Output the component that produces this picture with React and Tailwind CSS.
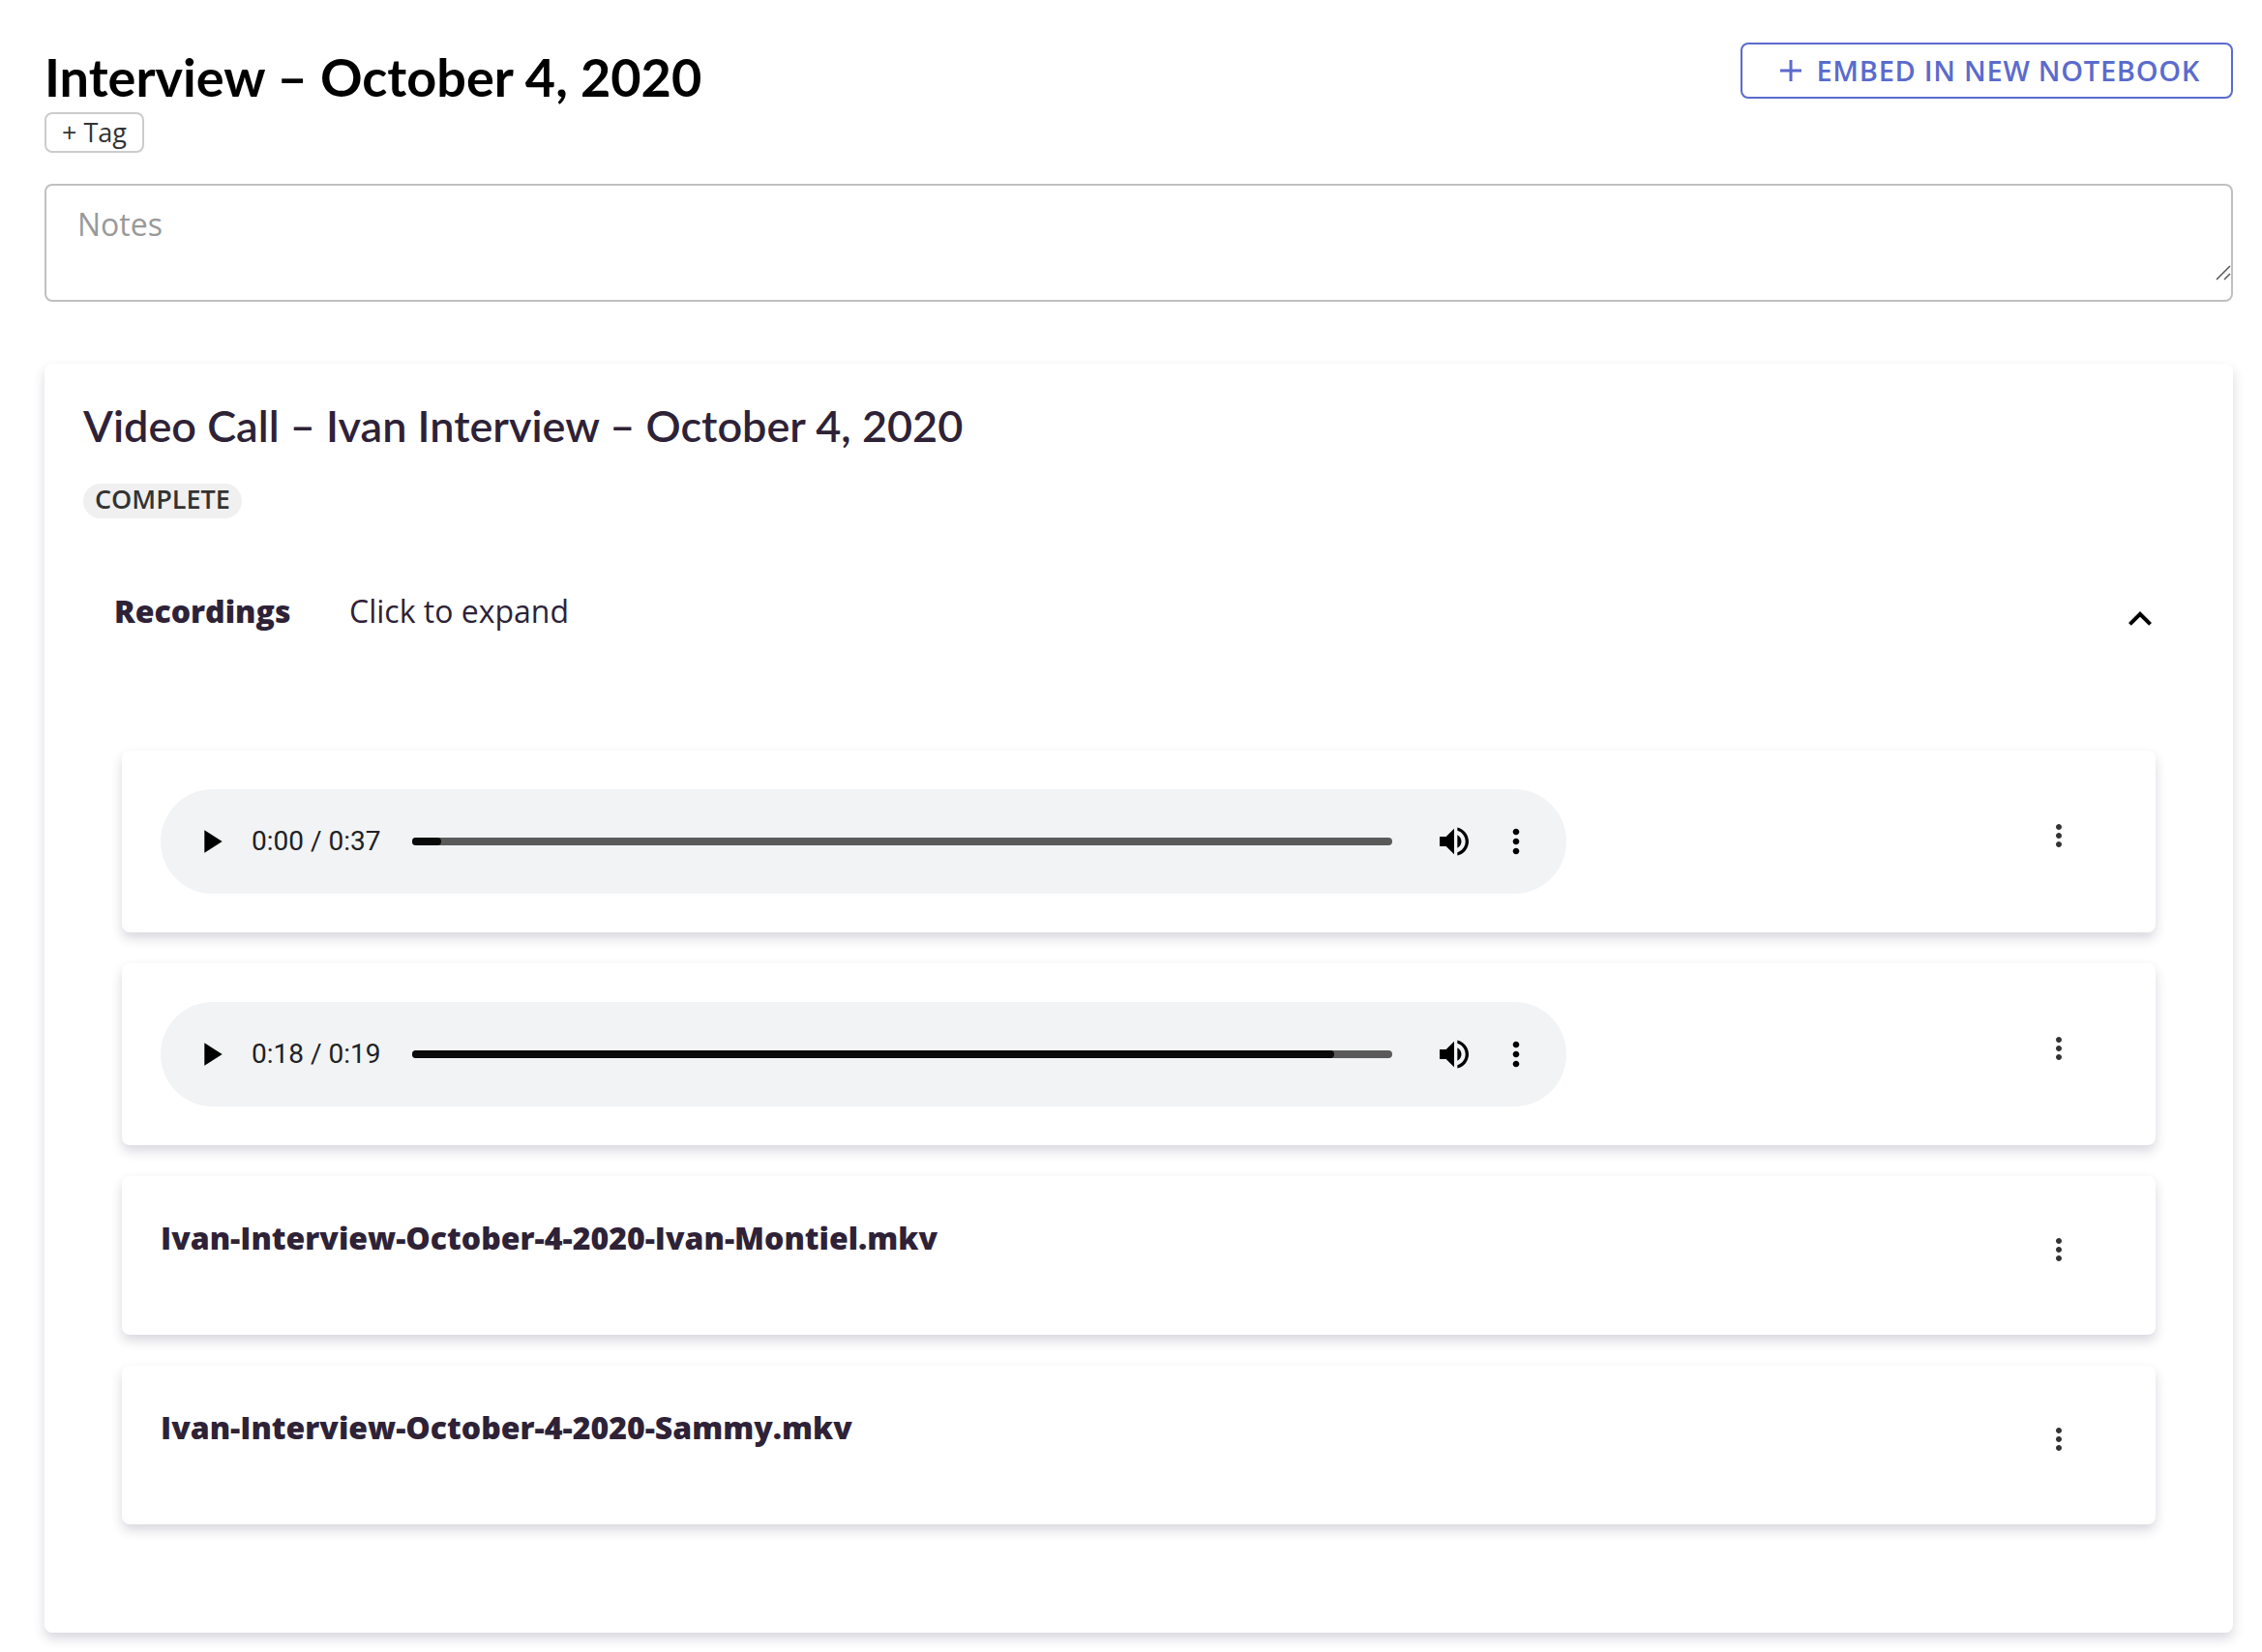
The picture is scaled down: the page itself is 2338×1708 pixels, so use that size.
import React from "react";

const recordings = [
  { id: "a", kind: "audio", time: "0:00 / 0:37", played: 3 },
  { id: "b", kind: "audio", time: "0:18 / 0:19", played: 94 },
  { id: "c", kind: "file", name: "Ivan-Interview-October-4-2020-Ivan-Montiel.mkv" },
  { id: "d", kind: "file", name: "Ivan-Interview-October-4-2020-Sammy.mkv" },
];

function Icon({ d, className }) {
  return (
    <svg viewBox="0 0 24 24" fill="currentColor" aria-hidden="true" className={className}>
      <path d={d} />
    </svg>
  );
}

const PLAY = "M8 5v14l11-7z";
const MORE =
  "M12 8c1.1 0 2-.9 2-2s-.9-2-2-2-2 .9-2 2 .9 2 2 2zm0 2c-1.1 0-2 .9-2 2s.9 2 2 2 2-.9 2-2-.9-2-2-2zm0 6c-1.1 0-2 .9-2 2s.9 2 2 2 2-.9 2-2-.9-2-2-2z";
const VOLUME =
  "M3 9v6h4l5 5V4L7 9H3zm13.5 3c0-1.77-1.02-3.29-2.5-4.03v8.05c1.48-.73 2.5-2.25 2.5-4.02zM14 3.23v2.06c2.89.86 5 3.54 5 6.71s-2.11 5.85-5 6.71v2.06c4.01-.91 7-4.49 7-8.77s-2.99-7.86-7-8.77z";
const UP = "M12 8l-6 6 1.41 1.41L12 10.83l4.59 4.58L18 14z";

function Player({ time, played }) {
  return (
    <div className="flex h-[108px] w-[73.4%] items-center rounded-full bg-[#f1f3f4] px-8 font-[Roboto,sans-serif]">
      <button type="button" aria-label="Play" className="shrink-0">
        <Icon d={PLAY} className="size-10 text-black" />
      </button>
      <span className="ml-[22px] w-[166px] shrink-0 text-[28px] leading-8 whitespace-nowrap text-[#202124]">{time}</span>
      <div className="relative h-2 grow rounded-full bg-[#5a5a5a]">
        <div className="h-2 rounded-full bg-[#0a0a0a]" style={{ width: `${played}%` }} />
        <input
          type="range"
          aria-label="Position"
          min="0"
          max="100"
          defaultValue={played}
          className="absolute inset-0 h-2 w-full cursor-pointer opacity-0"
        />
      </div>
      <button type="button" aria-label="Mute" className="ml-11 shrink-0">
        <Icon d={VOLUME} className="size-10 text-black" />
      </button>
      <button type="button" aria-label="Player options" className="ml-6 shrink-0">
        <Icon d={MORE} className="size-10 text-black" />
      </button>
    </div>
  );
}

function Recording({ item }) {
  const audio = item.kind === "audio";
  return (
    <li
      className={
        "flex justify-between rounded-lg bg-white pt-10 pr-[82px] pl-10 shadow-[0_6px_12px_rgba(46,42,80,0.19)] " +
        (audio ? "h-[188px]" : "h-[164px]")
      }
    >
      {audio ? (
        <Player time={item.time} played={item.played} />
      ) : (
        <h3 className="text-[32px] leading-[48px] font-extrabold">{item.name}</h3>
      )}
      <button
        type="button"
        aria-label="Recording options"
        className={"flex h-9 shrink-0 text-[#333] " + (audio ? "mt-[30px]" : "mt-[18px]")}
      >
        <Icon d={MORE} className="size-9" />
      </button>
    </li>
  );
}

export default function App() {
  return (
    <main className="min-h-screen bg-white pt-11 pr-[30px] pb-5 pl-[46px] font-['Open_Sans',sans-serif] text-[#2e2237]">
      <header className="flex items-start justify-between">
        <div>
          <h1 className="font-[Lato,sans-serif] text-[54px] leading-[72px] font-bold text-black">
            Interview – October 4, 2020
          </h1>
          <button
            type="button"
            className="block h-[42px] rounded-lg border-2 border-[#ccc] px-4 text-[27px] leading-9 text-[#333]"
          >
            + Tag
          </button>
        </div>
        <button
          type="button"
          className="flex h-[58px] items-center gap-3 rounded-lg border-2 border-[#5b6bcd] pr-8 pl-9 text-[29px] leading-10 font-semibold tracking-wide text-[#5b6bcd]"
        >
          <svg viewBox="0 0 28 28" aria-hidden="true" className="size-7 fill-none stroke-current stroke-3">
            <path d="M14 3v22M3 14h22" />
          </svg>
          EMBED IN NEW NOTEBOOK
        </button>
      </header>

      <div className="relative mt-8 h-[122px] rounded-lg border-2 border-[#c0c0c0]">
        <textarea
          aria-label="Notes"
          placeholder="Notes"
          className="block h-full w-full resize-none bg-transparent px-8 pt-4 text-[32px] leading-[48px] outline-none placeholder:text-[#999]"
        />
        <svg viewBox="0 0 16 16" aria-hidden="true" className="absolute right-0 bottom-5 size-4 fill-none stroke-[#555] stroke-[1.5]">
          <path d="M1 15L15 1M9 15l6-6" />
        </svg>
      </div>

      <section className="mt-16 rounded-lg bg-white px-10 pt-8 pb-28 shadow-[0_6px_12px_rgba(46,42,80,0.19)]">
        <h2 className="font-[Lato,sans-serif] text-[45px] leading-[64px] font-semibold">
          Video Call – Ivan Interview – October 4, 2020
        </h2>
        <span className="mt-7 block h-9 w-fit rounded-full bg-[#f0f0f0] px-3 text-[27px] leading-8 font-semibold text-[#333]">
          COMPLETE
        </span>
        <div className="mt-[72px] flex items-start pr-8 pl-8 text-[32px] leading-[48px]">
          <strong className="w-[243px] font-extrabold">Recordings</strong>
          <span className="grow">Click to expand</span>
          <button type="button" aria-label="Collapse recordings" className="mt-2">
            <Icon d={UP} className="size-12 text-black" />
          </button>
        </div>
        <ul className="mt-28 grid gap-8 px-10">
          {recordings.map((item) => (
            <Recording key={item.id} item={item} />
          ))}
        </ul>
      </section>
    </main>
  );
}
